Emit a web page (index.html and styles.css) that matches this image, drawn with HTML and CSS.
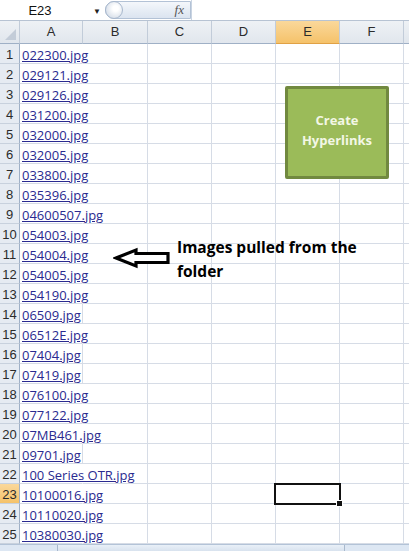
FILE: index.html
```html
<!DOCTYPE html>
<html>
<head>
    <meta charset="UTF-8">
    <title>Image list</title>
    <link rel="stylesheet" href="styles.css">
</head>
<body>
    <div class="window">
        <div class="formula-bar">
            <div class="name-box">E23</div>
            <span class="drop">&#9660;</span>
            <div class="fx-pill"><span class="knob"></span><i>fx</i></div>
            <div class="formula-input"></div>
        </div>

        <div class="sheet">
            <div class="hd corner"><span class="tri"></span></div>
            <div class="hd">A</div>
            <div class="hd">B</div>
            <div class="hd">C</div>
            <div class="hd">D</div>
            <div class="hd active">E</div>
            <div class="hd">F</div>
            <div class="hd"></div>

            <div class="rh">1</div><div class="cell spill"><a href="#">022300.jpg</a></div><div class="cell"></div><div class="cell"></div><div class="cell"></div><div class="cell"></div><div class="cell"></div><div class="cell"></div>
            <div class="rh">2</div><div class="cell spill"><a href="#">029121.jpg</a></div><div class="cell"></div><div class="cell"></div><div class="cell"></div><div class="cell"></div><div class="cell"></div><div class="cell"></div>
            <div class="rh">3</div><div class="cell spill"><a href="#">029126.jpg</a></div><div class="cell"></div><div class="cell"></div><div class="cell"></div><div class="cell"></div><div class="cell"></div><div class="cell"></div>
            <div class="rh">4</div><div class="cell spill"><a href="#">031200.jpg</a></div><div class="cell"></div><div class="cell"></div><div class="cell"></div><div class="cell"></div><div class="cell"></div><div class="cell"></div>
            <div class="rh">5</div><div class="cell spill"><a href="#">032000.jpg</a></div><div class="cell"></div><div class="cell"></div><div class="cell"></div><div class="cell"></div><div class="cell"></div><div class="cell"></div>
            <div class="rh">6</div><div class="cell spill"><a href="#">032005.jpg</a></div><div class="cell"></div><div class="cell"></div><div class="cell"></div><div class="cell"></div><div class="cell"></div><div class="cell"></div>
            <div class="rh">7</div><div class="cell spill"><a href="#">033800.jpg</a></div><div class="cell"></div><div class="cell"></div><div class="cell"></div><div class="cell"></div><div class="cell"></div><div class="cell"></div>
            <div class="rh">8</div><div class="cell spill"><a href="#">035396.jpg</a></div><div class="cell"></div><div class="cell"></div><div class="cell"></div><div class="cell"></div><div class="cell"></div><div class="cell"></div>
            <div class="rh">9</div><div class="cell spill"><a href="#">04600507.jpg</a></div><div class="cell"></div><div class="cell"></div><div class="cell"></div><div class="cell"></div><div class="cell"></div><div class="cell"></div>
            <div class="rh">10</div><div class="cell spill"><a href="#">054003.jpg</a></div><div class="cell"></div><div class="cell"></div><div class="cell"></div><div class="cell"></div><div class="cell"></div><div class="cell"></div>
            <div class="rh">11</div><div class="cell spill"><a href="#">054004.jpg</a></div><div class="cell"></div><div class="cell"></div><div class="cell"></div><div class="cell"></div><div class="cell"></div><div class="cell"></div>
            <div class="rh">12</div><div class="cell spill"><a href="#">054005.jpg</a></div><div class="cell"></div><div class="cell"></div><div class="cell"></div><div class="cell"></div><div class="cell"></div><div class="cell"></div>
            <div class="rh">13</div><div class="cell spill"><a href="#">054190.jpg</a></div><div class="cell"></div><div class="cell"></div><div class="cell"></div><div class="cell"></div><div class="cell"></div><div class="cell"></div>
            <div class="rh">14</div><div class="cell"><a href="#">06509.jpg</a></div><div class="cell"></div><div class="cell"></div><div class="cell"></div><div class="cell"></div><div class="cell"></div><div class="cell"></div>
            <div class="rh">15</div><div class="cell spill"><a href="#">06512E.jpg</a></div><div class="cell"></div><div class="cell"></div><div class="cell"></div><div class="cell"></div><div class="cell"></div><div class="cell"></div>
            <div class="rh">16</div><div class="cell"><a href="#">07404.jpg</a></div><div class="cell"></div><div class="cell"></div><div class="cell"></div><div class="cell"></div><div class="cell"></div><div class="cell"></div>
            <div class="rh">17</div><div class="cell"><a href="#">07419.jpg</a></div><div class="cell"></div><div class="cell"></div><div class="cell"></div><div class="cell"></div><div class="cell"></div><div class="cell"></div>
            <div class="rh">18</div><div class="cell spill"><a href="#">076100.jpg</a></div><div class="cell"></div><div class="cell"></div><div class="cell"></div><div class="cell"></div><div class="cell"></div><div class="cell"></div>
            <div class="rh">19</div><div class="cell spill"><a href="#">077122.jpg</a></div><div class="cell"></div><div class="cell"></div><div class="cell"></div><div class="cell"></div><div class="cell"></div><div class="cell"></div>
            <div class="rh">20</div><div class="cell spill"><a href="#">07MB461.jpg</a></div><div class="cell"></div><div class="cell"></div><div class="cell"></div><div class="cell"></div><div class="cell"></div><div class="cell"></div>
            <div class="rh">21</div><div class="cell"><a href="#">09701.jpg</a></div><div class="cell"></div><div class="cell"></div><div class="cell"></div><div class="cell"></div><div class="cell"></div><div class="cell"></div>
            <div class="rh">22</div><div class="cell spill"><a href="#">100 Series OTR.jpg</a></div><div class="cell"></div><div class="cell"></div><div class="cell"></div><div class="cell"></div><div class="cell"></div><div class="cell"></div>
            <div class="rh active">23</div><div class="cell spill"><a href="#">10100016.jpg</a></div><div class="cell"></div><div class="cell"></div><div class="cell"></div><div class="cell"></div><div class="cell"></div><div class="cell"></div>
            <div class="rh">24</div><div class="cell spill"><a href="#">10110020.jpg</a></div><div class="cell"></div><div class="cell"></div><div class="cell"></div><div class="cell"></div><div class="cell"></div><div class="cell"></div>
            <div class="rh">25</div><div class="cell spill"><a href="#">10380030.jpg</a></div><div class="cell"></div><div class="cell"></div><div class="cell"></div><div class="cell"></div><div class="cell"></div><div class="cell"></div>

            <!-- shapes floating over the sheet -->
            <button class="create-btn">Create<br>Hyperlinks</button>

            <svg class="arrow" width="60" height="22" viewBox="0 0 60 22">
                <path d="M3 11 L23 3 L23 6.5 L55 6.5 L55 15.5 L23 15.5 L23 19 Z" fill="#fff" stroke="#000" stroke-width="3.2" stroke-linejoin="miter"/>
            </svg>
            <div class="note">Images pulled from the<br>folder</div>

            <div class="selection"><span class="handle"></span></div>
        </div>

        <div class="tab-strip">
            <div class="tab-nav"></div>
            <div class="tab-scroll"></div>
        </div>
    </div>
</body>
</html>
```

FILE: styles.css
```css
/* spreadsheet window */
html, body {
    margin: 0;
    padding: 0;
    background: #fff;
}

body {
    font-family: "Open Sans", "Liberation Sans", sans-serif;
    font-size: 13px;
    color: #222;
}

.window {
    width: 409px;
    height: 551px;
    overflow: hidden;
}

/* formula bar */
.formula-bar {
    display: flex;
    align-items: center;
    height: 21px;
    box-sizing: border-box;
    border-bottom: 1px solid #b7c3d3;
    background: #fff;
}

.name-box {
    width: 80px;
    text-align: center;
    font-family: "Liberation Sans", sans-serif;
    font-size: 13px;
    color: #111;
}

.drop {
    font-size: 8px;
    color: #222;
    margin-left: 13px;
    width: 12px;
}

.fx-pill {
    position: relative;
    width: 86px;
    height: 18px;
    box-sizing: border-box;
    border: 1px solid #b3c2d6;
    border-radius: 10px 0 0 10px;
    background: linear-gradient(#f4f7fb, #dbe4f0);
    display: flex;
    align-items: center;
    justify-content: flex-end;
}

.fx-pill .knob {
    position: absolute;
    left: -1px;
    top: -1px;
    width: 18px;
    height: 18px;
    border-radius: 50%;
    border: 1px solid #a8b8cd;
    box-sizing: border-box;
    background: radial-gradient(circle at 60% 40%, #ffffff 20%, #d5dde8 80%);
}

.fx-pill i {
    font-family: "Liberation Serif", serif;
    font-size: 13px;
    color: #555;
    margin-right: 6px;
}

.formula-input {
    flex: 1;
    height: 20px;
    border-left: 1px solid #c9d4e2;
}

/* grid */
.sheet {
    position: relative;
    display: grid;
    grid-template-columns: 20px 63px 65px 64px 64px 64px 64px 64px;
    grid-template-rows: 23px;
    grid-auto-rows: 20px;
    width: 468px;
}

.hd {
    box-sizing: border-box;
    border-right: 1px solid #c2ccd9;
    border-bottom: 1px solid #9fb0c6;
    background: linear-gradient(#eef1f5, #e1e6ed);
    text-align: center;
    line-height: 22px;
    font-family: "Liberation Sans", sans-serif;
    font-size: 13px;
    color: #2b2b2b;
}

.hd.active {
    background: linear-gradient(#fad89b, #f5c26a);
    border-bottom-color: #e0a145;
}

.corner {
    position: relative;
}

.corner .tri {
    position: absolute;
    right: 3px;
    bottom: 3px;
    width: 0;
    height: 0;
    border-left: 11px solid transparent;
    border-bottom: 11px solid #c3ccd8;
}

.rh {
    box-sizing: border-box;
    border-right: 1px solid #9fb0c6;
    border-bottom: 1px solid #c8d1dd;
    background: #e6ebf2;
    text-align: center;
    line-height: 21px;
    font-family: "Liberation Sans", sans-serif;
    font-size: 13px;
    color: #2b2b2b;
}

.rh.active {
    background: linear-gradient(#fad89b, #f5c26a);
}

.cell {
    box-sizing: border-box;
    border-right: 1px solid #d6dce6;
    border-bottom: 1px solid #d6dce6;
    padding-left: 2px;
    line-height: 22px;
    white-space: nowrap;
    overflow: visible;
}

.cell.spill {
    border-right-color: transparent;
}

.cell a {
    color: #2a2a90;
    text-decoration: underline;
}

/* shapes */
.create-btn {
    position: absolute;
    left: 285px;
    top: 65px;
    width: 104px;
    height: 93px;
    box-sizing: border-box;
    border: 3px solid #71893f;
    border-radius: 2px;
    background: #9bbb59;
    color: #f3f7e6;
    font-family: "Open Sans", sans-serif;
    font-weight: bold;
    font-size: 13px;
    line-height: 20px;
    padding: 0 0 5px;
    cursor: pointer;
}

.arrow {
    position: absolute;
    left: 113px;
    top: 226px;
}

.note {
    position: absolute;
    left: 177px;
    top: 214px;
    font-family: "Open Sans", sans-serif;
    font-weight: bold;
    font-size: 15.5px;
    line-height: 24px;
    color: #000;
    white-space: nowrap;
}

.selection {
    position: absolute;
    left: 274px;
    top: 462px;
    width: 67px;
    height: 22px;
    box-sizing: border-box;
    border: 2px solid #111;
}

.selection .handle {
    position: absolute;
    right: -4px;
    bottom: -4px;
    width: 5px;
    height: 5px;
    background: #111;
    border: 1px solid #fff;
}

/* sheet tabs strip */
.tab-strip {
    display: flex;
    height: 8px;
    border-top: 1px solid #b3c3d7;
    background: #dde7f3;
}

.tab-nav {
    width: 57px;
    border-right: 1px solid #a9b9cd;
}

.tab-scroll {
    width: 286px;
    border-right: 1px solid #a9b9cd;
    background: linear-gradient(#e9f0f8, #d3deeb);
}
```
